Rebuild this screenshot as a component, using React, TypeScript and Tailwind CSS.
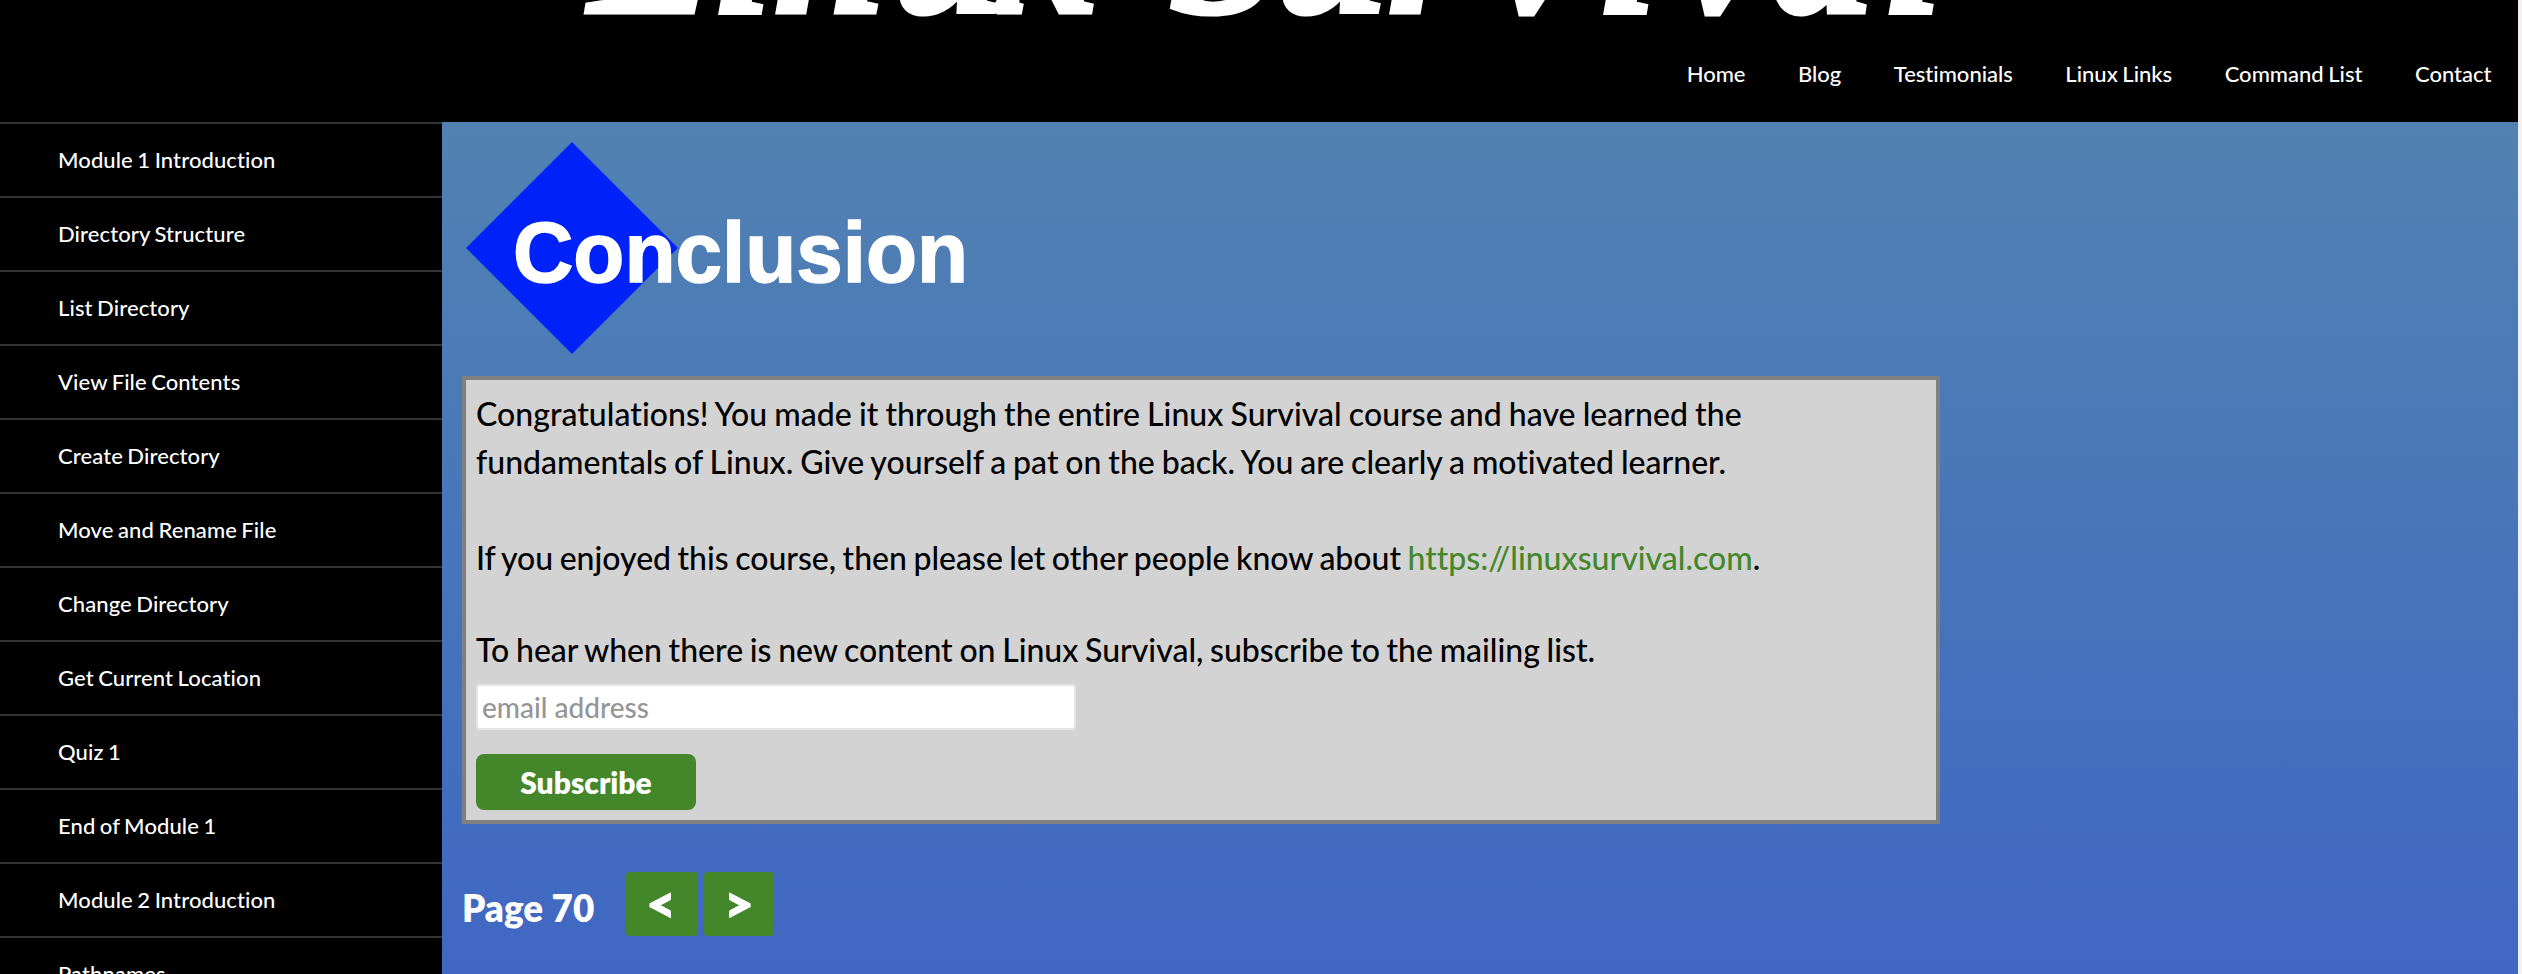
const modules = [
  "Module 1 Introduction",
  "Directory Structure",
  "List Directory",
  "View File Contents",
  "Create Directory",
  "Move and Rename File",
  "Change Directory",
  "Get Current Location",
  "Quiz 1",
  "End of Module 1",
  "Module 2 Introduction",
  "Pathnames",
];

const links = ["Home", "Blog", "Testimonials", "Linux Links", "Command List", "Contact"];

function Title() {
  return (
    <div className="-mt-[171px] mb-[-11px] ml-[588px] flex h-[232px] shrink-0 font-['Liberation_Serif'] text-[200px] leading-[232px] font-bold italic [-webkit-text-stroke:5px_white]">
      <span className="w-[128px]">L</span>
      <span className="w-[58px]">i</span>
      <span className="w-[120px]">n</span>
      <span className="w-[105px]">u</span>
      <span className="w-[170px]">x</span>
      <span className="w-[108px]">S</span>
      <span className="w-[111px]">u</span>
      <span className="w-[105px]">r</span>
      <span className="w-[108px]">v</span>
      <span className="w-[78px]">i</span>
      <span className="w-[94px]">v</span>
      <span className="w-[114px]">a</span>
      <span className="w-[60px]">l</span>
    </div>
  );
}

export default function App() {
  return (
    <div className="flex h-[974px] w-[2522px] overflow-hidden bg-[#f2f0f0] font-['Lato',sans-serif] text-white [font-variant-ligatures:none]">
      <div className="flex w-[2518px] flex-col bg-black">
        <header className="flex h-[122px] shrink-0 flex-col overflow-hidden">
          <Title />
          <nav className="flex justify-end gap-[52.5px] pr-[26.5px] text-[22px] leading-[48px] font-medium [word-spacing:-1px]">
            {links.map((l) => (
              <a key={l}>{l}</a>
            ))}
          </nav>
        </header>
        <div className="flex h-[852px] overflow-hidden">
          <aside className="w-[442px] shrink-0">
            {modules.map((m) => (
              <div
                key={m}
                className="h-[74px] border-t-2 border-[#333] pl-[58px] text-[22px] leading-[72px] font-medium tracking-[0.1px] [word-spacing:-1.2px]"
              >
                {m}
              </div>
            ))}
          </aside>
          <main className="flex-1 bg-linear-to-b from-[#5182b1] to-[#4067c3] pl-5">
            <div className="h-[254px] pt-5 pl-1">
              <svg width="520" height="214" viewBox="0 0 520 214">
                <path d="M106 0 212 106 106 212 0 106Z" fill="#0022f8" />
                <text x="47" y="140" fill="#fff" stroke="#fff" strokeWidth="1.5" fontFamily="Liberation Sans" fontWeight="700" fontSize="85" textLength="455" lengthAdjust="spacingAndGlyphs">
                  Conclusion
                </text>
              </svg>
            </div>
            <section className="h-[448px] w-[1478px] border-4 border-[#808080] bg-[#d3d3d3] px-2.5 pt-2.5 text-[32px] leading-[48px] font-medium text-black">
              <p>
                <span className="tracking-[0.03px] [word-spacing:-1px]">
                  Congratulations! You made it through the entire Linux Survival course and have learned the
                </span>
                <br />
                <span className="[word-spacing:-1.2px]">
                  fundamentals of Linux. Give yourself a pat on the back. You are clearly a motivated learner.
                </span>
              </p>
              <p className="mt-12 [word-spacing:-1.6px]">
                If you enjoyed this course, then please let other people know about{" "}
                <a className="text-[#44862a]">https://linuxsurvival.com</a>.
              </p>
              <p className="mt-11 [word-spacing:-1.4px]">
                To hear when there is new content on Linux Survival, subscribe to the mailing list.
              </p>
              <input
                placeholder="email address"
                className="mt-2.5 block h-[46px] w-[600px] rounded-[4px] border-2 border-[#e6e6e6] bg-white px-1 text-[28px] font-medium placeholder:text-[#959595]"
              />
              <button className="mt-6 block h-14 w-[220px] rounded-[8px] bg-[#44862a] text-[30px] leading-[56px] font-extrabold text-white">
                Subscribe
              </button>
            </section>
            <div className="mt-12 flex h-16 text-[36.8px] font-extrabold">
              <span className="w-[164px] pt-[4px] leading-[64px]">Page 70</span>
              <button className="mr-1.5 flex w-[72px] justify-center rounded-[4px] bg-[#44862a] pr-0.5 text-[50px] leading-[62px] font-black [-webkit-text-stroke:1.5px_white]">
                &lt;
              </button>
              <button className="flex w-[70px] justify-center rounded-[4px] bg-[#44862a] text-[50px] leading-[62px] font-black [-webkit-text-stroke:1.5px_white]">
                &gt;
              </button>
            </div>
          </main>
        </div>
      </div>
    </div>
  );
}
